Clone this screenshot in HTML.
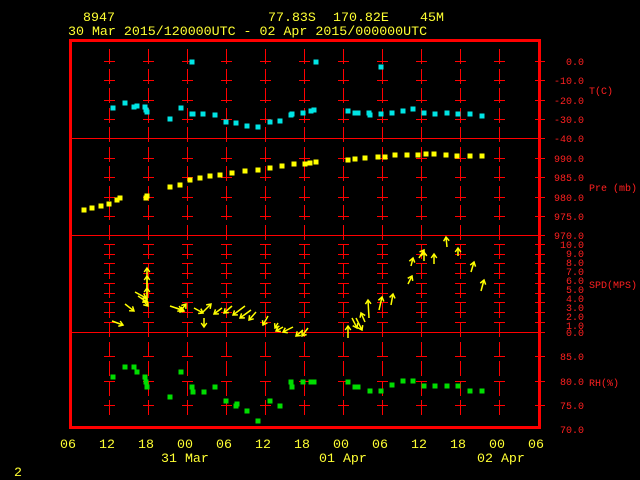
<!DOCTYPE html>
<html><head><meta charset="utf-8"><style>
html,body{margin:0;padding:0;background:#000;width:640px;height:480px;overflow:hidden}
svg{display:block}
text{font-family:"Liberation Mono",monospace}
.y{fill:#ffff33;font-size:13.3px}
.r{fill:#ff2020;font-size:10px}
</style></head><body>
<svg id="s" width="640" height="480" xmlns="http://www.w3.org/2000/svg">
<g id="grid" fill="#ff0000"></g>
<rect x="70.5" y="40.5" width="469" height="387" fill="none" stroke="#ff0000" stroke-width="3"/>
<g fill="#ff0000">
<rect x="71" y="138" width="473" height="1"/>
<rect x="71" y="235" width="473" height="1"/>
<rect x="71" y="332" width="473" height="1"/>
</g>
<g id="data"></g>
<text class="y" x="83" y="21">8947</text>
<text class="y" x="268" y="21">77.83S</text>
<text class="y" x="333" y="21">170.82E</text>
<text class="y" x="420" y="21">45M</text>
<text class="y" x="68" y="35">30 Mar 2015/120000UTC - 02 Apr 2015/000000UTC</text>
<g class="r" text-anchor="end">
<text x="584" y="65">0.0</text><text x="584" y="84">-10.0</text><text x="584" y="104">-20.0</text><text x="584" y="123">-30.0</text><text x="584" y="142">-40.0</text>
<text x="584" y="162">990.0</text><text x="584" y="181">985.0</text><text x="584" y="201">980.0</text><text x="584" y="220">975.0</text><text x="584" y="239">970.0</text>
<text x="584" y="248">10.0</text><text x="584" y="257">9.0</text><text x="584" y="266">8.0</text><text x="584" y="275">7.0</text><text x="584" y="284">6.0</text><text x="584" y="293">5.0</text><text x="584" y="302">4.0</text><text x="584" y="311">3.0</text><text x="584" y="320">2.0</text><text x="584" y="329">1.0</text><text x="584" y="336">0.0</text>
<text x="584" y="360">85.0</text><text x="584" y="385">80.0</text><text x="584" y="409">75.0</text><text x="584" y="433">70.0</text>
</g>
<g class="r">
<text x="589" y="94">T(C)</text><text x="589" y="191">Pre (mb)</text><text x="589" y="288">SPD(MPS)</text><text x="589" y="386">RH(%)</text>
</g>
<g class="y">
<text x="60" y="448">06</text><text x="99" y="448">12</text><text x="138" y="448">18</text><text x="177" y="448">00</text><text x="216" y="448">06</text><text x="255" y="448">12</text><text x="294" y="448">18</text><text x="333" y="448">00</text><text x="372" y="448">06</text><text x="411" y="448">12</text><text x="450" y="448">18</text><text x="489" y="448">00</text><text x="528" y="448">06</text>
<text x="161" y="462">31 Mar</text><text x="319" y="462">01 Apr</text><text x="477" y="462">02 Apr</text>
<text x="14" y="476">2</text>
</g>
</svg>
<script>
var NS="http://www.w3.org/2000/svg";
function el(p,t,a){var e=document.createElementNS(NS,t);for(var k in a)e.setAttribute(k,a[k]);p.appendChild(e);return e;}
var g=document.getElementById("grid"),d=document.getElementById("data");
var ticks=[61,80,100,119,158,177,197,216,244,254,263,273,283,293,302,312,322,356,381,405];
var xs=[109,148,187,226,265,304,343,382,421,460,499];
xs.forEach(function(x,i){
 for(var y=49;y<419;y+=19.5){el(g,"rect",{x:x,y:Math.round(y),width:1,height:Math.min(15,419-Math.round(y))});}
 ticks.forEach(function(y){el(g,"rect",{x:x-5,y:y,width:11,height:1});});
});
ticks.concat([138,235,332]).forEach(function(y){el(g,"rect",{x:535,y:y,width:10,height:1});});
function pts(a,c){a.forEach(function(p){el(d,"rect",{x:p[0]-2.5,y:p[1]-2.5,width:5,height:5,fill:c});});}
pts([[113,108],[125,103],[134,107],[137,106],[145,107],[146,110],[147,112],[170,119],[181,108],[192,114],[193,114],[203,114],[215,115],[226,122],[236,123],[247,126],[258,127],[270,122],[280,121],[291,115],[292,114],[303,113],[311,111],[314,110],[192,62],[316,62],[381,67],[348,111],[355,113],[358,113],[369,113],[370,115],[381,114],[392,113],[403,111],[413,109],[424,113],[435,114],[447,113],[458,114],[470,114],[482,116]],"#00e5e5");
pts([[84,210],[92,208],[101,206],[109,204],[117,200],[120,198],[146,198],[147,196],[170,187],[180,185],[190,180],[200,178],[210,176],[220,175],[232,173],[245,171],[258,170],[270,168],[282,166],[294,164],[305,164],[310,163],[316,162],[348,160],[355,159],[365,158],[378,157],[385,157],[395,155],[407,155],[418,155],[426,154],[434,154],[446,155],[457,156],[470,156],[482,156]],"#ffff00");
pts([[113,377],[125,367],[134,367],[137,372],[145,377],[146,382],[147,387],[170,397],[181,372],[192,387],[193,392],[204,392],[215,387],[226,401],[236,406],[237,404],[247,411],[258,421],[270,401],[280,406],[291,382],[292,387],[303,382],[311,382],[314,382],[348,382],[355,387],[358,387],[370,391],[381,391],[392,385],[403,381],[413,381],[424,386],[435,386],[447,386],[458,386],[470,391],[482,391]],"#00dd00");
var ar=[[112,321,123,325],[125,304,134,311],[135,292,146,298],[138,296,147,302],[143,300,148,306],[147,300,147,268],[147,290,147,276],[147,302,147,288],[170,306,182,310],[176,308,184,311],[180,312,186,304],[194,308,203,313],[203,312,211,304],[204,318,204,327],[222,308,214,314],[232,306,224,313],[245,306,233,315],[251,310,240,318],[256,312,249,320],[268,316,263,325],[278,323,275,328],[283,327,276,331],[293,327,283,332],[303,330,296,336],[308,328,302,336],[348,338,348,326],[352,318,357,328],[356,318,362,330],[365,322,361,313],[369,318,368,300],[379,310,382,297],[391,305,393,294],[408,284,412,276],[411,266,413,258],[419,258,424,250],[424,261,424,252],[434,264,434,254],[447,247,446,237],[458,256,458,248],[471,272,474,262],[481,291,484,280]];
ar.forEach(function(a){
 el(d,"line",{x1:a[0],y1:a[1],x2:a[2],y2:a[3],stroke:"#ffff00","stroke-width":1.5});
 var dx=a[2]-a[0],dy=a[3]-a[1],L=Math.sqrt(dx*dx+dy*dy)||1;dx/=L;dy/=L;
 var s=4;
 el(d,"polyline",{points:(a[2]-s*dx-s*0.7*dy)+","+(a[3]-s*dy+s*0.7*dx)+" "+a[2]+","+a[3]+" "+(a[2]-s*dx+s*0.7*dy)+","+(a[3]-s*dy-s*0.7*dx),fill:"none",stroke:"#ffff00","stroke-width":1.5});
});
</script>
</body></html>
